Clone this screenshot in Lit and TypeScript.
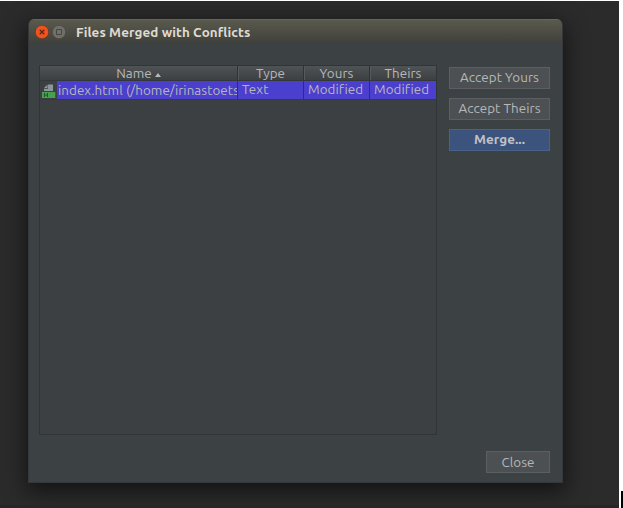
import { LitElement, html, css, svg } from "lit";
import { customElement } from "lit/decorators.js";

@customElement("app-root")
export class AppRoot extends LitElement {
  static styles = css`
    :host { display: block; width: 623px; height: 508px; overflow: hidden; background: #fff; position: relative;
      font: 13.4px/16px Ubuntu, "Noto Sans", sans-serif; letter-spacing: .06px; color: #b5b8b9; }
    * { box-sizing: border-box; }
    .desktop { width: 619px; height: 507px; margin-top: 1px; padding: 18px 0 0 28px; background: #2b2b2b; border-bottom: 3px solid #2b2327; overflow: hidden; }
    .caret { position: absolute; left: 621px; top: 491px; width: 2px; height: 17px; background: #000; }
    .window { width: 535px; height: 464px; border-radius: 6px 6px 0 0; background: #3c4144; display: flex; flex-direction: column;
      border: 1px solid #35373a; border-top: 0; box-shadow: 0 7px 22px 2px rgba(0,0,0,.55); overflow: hidden; }
    .title { height: 25px; flex: none; background: linear-gradient(#5a594d, #3f403b); border-top: 1px solid #66655a; display: flex; align-items: center; padding-left: 6px; }
    .title svg { display: block; flex: none; margin-right: 3px; }
    .title h1 { margin: 2px 0 0 7px; font: bold 13.4px/16px Ubuntu, "Noto Sans", sans-serif; letter-spacing: .1px; color: #dfdbd2; white-space: nowrap; }
    .body { flex: 1; display: grid; grid-template-columns: 398px 101px; column-gap: 12px; grid-template-rows: 370px 22px; row-gap: 16px; padding: 21px 0 0 10px; }
    .table { border: 1px solid #323537; background: #3c4043; }
    .row { display: grid; grid-template-columns: 198px 66px 66px 66px; }
    .head { height: 15px; background: linear-gradient(#505356, #3d4043); border-bottom: 1px solid #35383a; }
    .head span { text-align: center; border-right: 1px solid #303335; line-height: 16px; height: 14px; box-shadow: 1px 0 #56595b; white-space: nowrap; }
    .head span:last-child, .sel span:last-child { border-right: 0; box-shadow: none; }
    .sel { height: 19px; background: #4b3fcd; border-bottom: 1px solid #333657; }
    .sel > * { border-right: 1px solid #302c74; white-space: nowrap; overflow: hidden; padding-left: 4px; height: 18px; line-height: 18px; }
    .sel .file { display: flex; padding: 0; line-height: 20px; }
    .file svg { flex: none; background: #3c4043; }
    .file b { font-weight: normal; padding-left: 1px; }
    .actions { display: flex; flex-direction: column; gap: 9px; padding-top: 2px; }
    button { height: 22px; width: 101px; padding: 0; border: 1px solid #5b5f61; background: #4c5052; color: inherit; font: inherit; letter-spacing: inherit; line-height: 18px; white-space: nowrap; }
    .primary { background: #3c537e; border-color: #476488; font-weight: bold; color: #c0c2c8; }
    .close { grid-column: 2; width: 64px; justify-self: end; padding-top: 1px; }
    .arrow { display: inline-block; border: 3px solid transparent; border-top: 0; border-bottom: 4px solid #b5b8b9; margin: 0 0 1px 3px; }
  `;

  private closeIcon() {
    return svg`<svg width="14" height="14" viewBox="0 0 14 14"><circle cx="7" cy="7" r="6.7" fill="#f0541e" stroke="#55352a" stroke-width=".6"/><path d="M4.7 4.7l4.6 4.6M9.3 4.7L4.7 9.3" stroke="#5a2617" stroke-width="1.3"/></svg>`;
  }
  private maxIcon() {
    return svg`<svg width="14" height="14" viewBox="0 0 14 14"><circle cx="7" cy="7" r="6.6" fill="#706f68" stroke="#4b4a43" stroke-width=".6"/><path d="M4.5 4.5h5v5h-5z" fill="none" stroke="#46453f"/></svg>`;
  }
  private fileIcon() {
    return svg`<svg width="17" height="18" viewBox="0 0 17 18"><path d="M8 3.5H13V10H4V7.7h4z" fill="#8b959b"/><path d="M7.5 3.5V7H4z" fill="#8b959b"/><path d="M2 11h13.3v6H2z" fill="#46a050"/><path d="M4.5 12v4M7.5 12v4M4.5 14h3" stroke="#20572b"/></svg>`;
  }

  render() {
    return html`<div class="desktop"><section class="window">
      <header class="title">${this.closeIcon()}${this.maxIcon()}<h1>Files Merged with Conflicts</h1></header>
      <div class="body">
        <div class="table">
          <div class="row head"><span>Name<i class="arrow"></i></span><span>Type</span><span>Yours</span><span>Theirs</span></div>
          <div class="row sel"><div class="file">${this.fileIcon()}<b>index.html (/home/irinastoets</b></div><span>Text</span><span>Modified</span><span>Modified</span></div>
        </div>
        <div class="actions"><button>Accept Yours</button><button>Accept Theirs</button><button class="primary">Merge...</button></div>
        <button class="close">Close</button>
      </div></section></div><div class="caret"></div>`;
  }
}
